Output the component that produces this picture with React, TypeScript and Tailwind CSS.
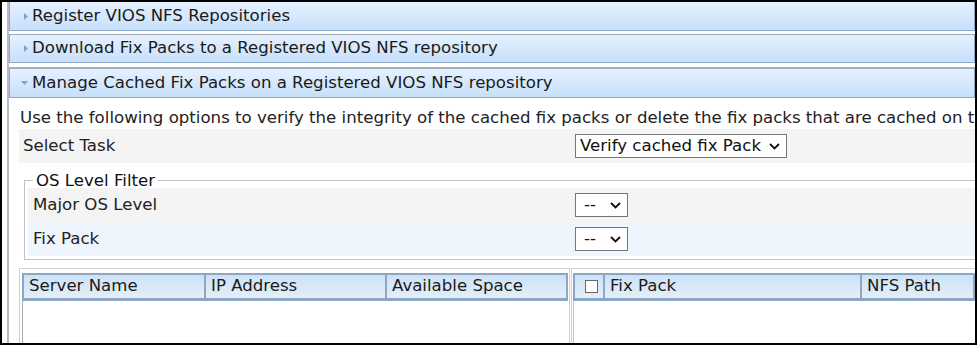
import React from 'react';

const font = { fontFamily: '"DejaVu Sans", Verdana, sans-serif' };

function Chevron() {
  return (
    <svg width="11" height="7" viewBox="0 0 11 7" className="shrink-0">
      <polyline points="1,1 5.5,5.5 10,1" fill="none" stroke="#111" strokeWidth="1.8" />
    </svg>
  );
}

function Select({ label, width, pad = 'pl-[4px]' }: { label: string; width: string; pad?: string }) {
  return (
    <div className={`flex items-center justify-between h-[24px] border border-[#767676] bg-white ${pad} pr-[6px] text-[16.6px] text-[#111] ${width}`}>
      <span className="leading-none">{label}</span>
      <Chevron />
    </div>
  );
}

function AccordionHeader({ title, open, first }: { title: string; open?: boolean; first?: boolean }) {
  return (
    <div
      className={`flex items-center border-x border-b border-[#8ea8c3] bg-gradient-to-b from-[#e6f1fe] to-[#c6e0fb] ${
        first ? 'h-[29px]' : open ? 'h-[31px] mt-[1px] border-t-2 border-t-[#a3afbd]' : 'h-[29px] border-t border-t-[#9aa9ba]'
      }`}
    >
      <span className="w-[22px] flex justify-end pr-[4px]">
        {open ? (
          <svg width="7" height="4" viewBox="0 0 7 4">
            <polygon points="0,0 7,0 3.5,4" fill="#7fa3c6" />
          </svg>
        ) : (
          <svg width="4" height="7" viewBox="0 0 4 7">
            <polygon points="0,0 4,3.5 0,7" fill="#7fa3c6" />
          </svg>
        )}
      </span>
      <span className="text-[16.6px] text-[#1a1a1a] whitespace-nowrap">{title}</span>
    </div>
  );
}

function HeaderCell({ children, className = '' }: { children?: React.ReactNode; className?: string }) {
  return (
    <div className={`h-full flex items-center pl-[5px] text-[16.6px] text-[#1a1a1a] whitespace-nowrap border-r-2 border-[#8ca7c4] ${className}`}>
      {children}
    </div>
  );
}

export default function App() {
  return (
    <div className="w-[977px] h-[345px] border-2 border-black bg-white overflow-hidden" style={font}>
      <div className="flex h-full">
        <div className="w-[5px] shrink-0" />
        <div className="flex-1 min-w-0 border-l-2 border-[#b7bbc7] flex flex-col">
          <div className="flex flex-col gap-[3px] w-[966px]">
            <AccordionHeader title="Register VIOS NFS Repositories" first />
            <AccordionHeader title="Download Fix Packs to a Registered VIOS NFS repository" />
            <AccordionHeader title="Manage Cached Fix Packs on a Registered VIOS NFS repository" open />
          </div>

          <div className="pl-[10px] pt-[9px] flex-1 flex flex-col">
            <p className="text-[16.6px] text-[#222] leading-[22px] whitespace-nowrap pl-[1px]">
              Use the following options to verify the integrity of the cached fix packs or delete the fix packs that are cached on the VIOS NFS repository.
            </p>

            <div className="flex items-center h-[34px] bg-[#f4f4f4]">
              <div className="w-[552px] pl-[4px] text-[16.6px] text-[#222]">Select Task</div>
              <div className="pl-[4px]">
                <Select label="Verify cached fix Pack" width="w-[212px]" />
              </div>
            </div>

            <fieldset className="mt-[8px] ml-[5px] border border-[#c3c3c3] px-[3px] pb-[3px] w-[960px]">
              <legend className="ml-[5px] px-[3px] text-[16.6px] text-[#111] leading-[19px]">OS Level Filter</legend>
              <div className="flex items-center h-[34px] bg-[#f4f4f4] -mt-[2px]">
                <div className="w-[543px] pl-[5px] text-[16.6px] text-[#222]">Major OS Level</div>
                <div className="pl-[4px]">
                  <Select label="--" width="w-[53px]" pad="pl-[8px]" />
                </div>
              </div>
              <div className="flex items-center h-[34px] bg-[#eef5fc]">
                <div className="w-[543px] pl-[5px] text-[16.6px] text-[#222]">Fix Pack</div>
                <div className="pl-[4px]">
                  <Select label="--" width="w-[53px]" pad="pl-[8px]" />
                </div>
              </div>
            </fieldset>

            <div className="flex mt-[8px] flex-1 gap-[1px]">
              <div className="w-[551px] shrink-0 border-t border-x border-[#cfcfcf] pt-[4px] pl-[2px] pr-[1px] flex">
                <div className="flex-1 border-l border-[#a8a8a8]">
                  <div className="-ml-px flex h-[28px] border-l-2 border-t-2 border-b-[3px] border-[#8ca7c4] bg-gradient-to-b from-[#cde2f7] to-[#e4eef9]">
                    <HeaderCell className="w-[182px]">Server Name</HeaderCell>
                    <HeaderCell className="w-[181px]">IP Address</HeaderCell>
                    <HeaderCell className="flex-1 border-r-0">Available Space</HeaderCell>
                  </div>
                </div>
              </div>
              <div className="flex-1 min-w-0 border-t border-l border-[#cfcfcf] pt-[4px] pl-[1px] flex">
                <div className="flex-1 border-l border-[#c4c4c4]">
                  <div className="-ml-px flex h-[28px] border-l-2 border-t-2 border-b-[3px] border-[#8ca7c4] bg-gradient-to-b from-[#cde2f7] to-[#e4eef9]">
                    <HeaderCell className="w-[30px] justify-center pl-0">
                      <span className="w-[13px] h-[13px] border border-[#666] bg-white block" />
                    </HeaderCell>
                    <HeaderCell className="w-[257px]">Fix Pack</HeaderCell>
                    <HeaderCell className="flex-1 border-r-0">NFS Path</HeaderCell>
                  </div>
                </div>
              </div>
            </div>
          </div>
        </div>
      </div>
    </div>
  );
}
